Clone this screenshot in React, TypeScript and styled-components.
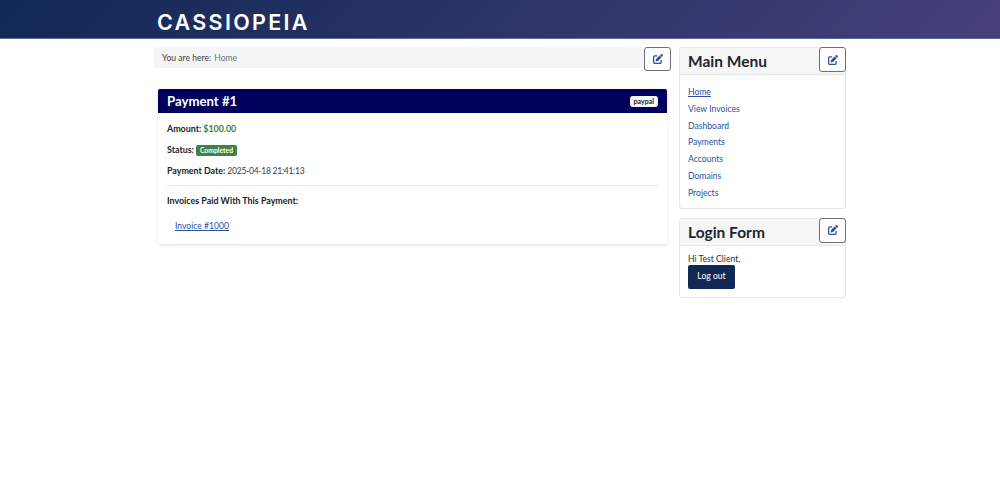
import React from "react";
import styled, { createGlobalStyle } from "styled-components";
import { FaPenToSquare } from "react-icons/fa6";

const GlobalStyle = createGlobalStyle`
  html, body { margin: 0; padding: 0; background: #fff; }
  body {
    font-family: "Lato", "Open Sans", sans-serif;
    font-size: 8.6px;
    color: #22262a;
  }
  * { box-sizing: border-box; }
`;

const Header = styled.header`
  height: 39px;
  background: linear-gradient(135deg, #112855 0%, #46407a 100%);
  border-bottom: 1px solid #5a6a90;
  padding: 7px 0 0 157px;
`;

const Logo = styled.div`
  font-family: "Inter", sans-serif;
  font-size: 21.5px;
  line-height: 30px;
  font-weight: 600;
  letter-spacing: 2.3px;
  color: #fff;
`;

const Page = styled.div`
  width: 692px;
  margin: 8px 0 0 154px;
  display: grid;
  grid-template-columns: 517px 167px;
  column-gap: 8px;
  align-items: start;
`;

const MainColumn = styled.main`
  display: flex;
  flex-direction: column;
`;

const BreadcrumbRow = styled.nav`
  position: relative;
  height: 21px;
  width: 517px;
  background: #f5f5f6;
  padding-left: 8px;
  display: flex;
  align-items: center;
  gap: 3px;
  color: #3a3f44;
`;

const Crumb = styled.span`
  color: #6c757d;
`;

const EditButton = styled.button`
  position: absolute;
  top: 0;
  right: 0;
  width: 27px;
  height: 24px;
  padding: 0;
  background: #fff;
  border: 1px solid #6d6f73;
  border-radius: 3px;
  color: #2a4ea0;
  display: flex;
  align-items: center;
  justify-content: center;
  font-size: 10px;
`;

const Card = styled.section`
  width: 509px;
  margin: 21px 0 0 4px;
  background: #fff;
  border-radius: 2px;
  box-shadow: 0 1px 3px rgba(0, 0, 0, 0.14);
`;

const CardHeader = styled.div`
  height: 24px;
  background: #00005c;
  border-radius: 2px 2px 0 0;
  padding: 0 9px;
  display: flex;
  align-items: center;
  justify-content: space-between;
`;

const CardTitle = styled.h2`
  margin: 0;
  font-size: 13.2px;
  font-weight: 700;
  color: #fff;
`;

const MethodBadge = styled.span`
  background: #f8f9fa;
  color: #212529;
  font-size: 7px;
  font-weight: 700;
  line-height: 11px;
  padding: 0 4px;
  border-radius: 3px;
`;

const CardBody = styled.div`
  padding: 10px 9px 12px;
`;

const Line = styled.p`
  margin: 0 0 9px;
  line-height: 12px;
  display: flex;
  align-items: center;
  gap: 2px;
`;

const Label = styled.strong`
  font-size: 8.9px;
  font-weight: 700;
  color: #1d2024;
`;

const Amount = styled.strong`
  font-size: 8.9px;
  color: #3c7d40;
  font-weight: 700;
`;

const DateText = styled.span`
  letter-spacing: -0.3px;
  color: #3a3f44;
`;

const StatusBadge = styled.span`
  background: #3f8243;
  color: #fff;
  font-size: 6.8px;
  font-weight: 700;
  line-height: 11px;
  padding: 0 4px;
  border-radius: 2px;
`;

const Divider = styled.hr`
  margin: -1px 0 9px;
  border: 0;
  border-top: 1px solid #e4e5e7;
`;

const InvoiceList = styled.div`
  padding: 4px 8px 0;
  line-height: 12px;
`;

const InvoiceLink = styled.a`
  color: #2a4ea0;
  text-decoration: underline;
`;

const Sidebar = styled.aside`
  display: flex;
  flex-direction: column;
  gap: 9px;
`;

const Module = styled.section`
  position: relative;
  border: 1px solid #e6e7e9;
  border-radius: 3px;
  background: #fff;
`;

const ModuleHeader = styled.h3`
  margin: 0;
  height: 27px;
  padding-left: 8px;
  background: #f6f6f7;
  border-bottom: 1px solid #e6e7e9;
  font-size: 15.5px;
  line-height: 26px;
  font-weight: 700;
  color: #22262a;
`;

const ModuleEdit = styled(EditButton)`
  top: -1px;
  right: -1px;
  height: 25px;
`;

const MenuList = styled.ul`
  list-style: none;
  margin: 0;
  padding: 9px 8px 6px;
  display: flex;
  flex-direction: column;
`;

const MenuItem = styled.li<{ $active?: boolean }>`
  height: 16.8px;
  line-height: 16.8px;
  color: #2a4ea0;
  text-decoration: ${(p) => (p.$active ? "underline" : "none")};
`;

const LoginBody = styled.div`
  padding: 8px 8px 8px;
  line-height: 11px;
  color: #2b2f33;
`;

const LogoutButton = styled.button`
  display: block;
  width: 47px;
  height: 24px;
  padding: 0;
  background: #112855;
  border: 0;
  border-radius: 2px;
  color: #fff;
  font: inherit;
`;

const menu = ["Home", "View Invoices", "Dashboard", "Payments", "Accounts", "Domains", "Projects"];

export default function App() {
  return (
    <>
      <GlobalStyle />
      <Header>
        <Logo>CASSIOPEIA</Logo>
      </Header>
      <Page>
        <MainColumn>
          <BreadcrumbRow>
            <span>You are here:</span>
            <Crumb>Home</Crumb>
            <EditButton aria-label="Edit">
              <FaPenToSquare />
            </EditButton>
          </BreadcrumbRow>
          <Card>
            <CardHeader>
              <CardTitle>Payment #1</CardTitle>
              <MethodBadge>paypal</MethodBadge>
            </CardHeader>
            <CardBody>
              <Line>
                <Label>Amount:</Label>
                <Amount>$100.00</Amount>
              </Line>
              <Line>
                <Label>Status:</Label>
                <StatusBadge>Completed</StatusBadge>
              </Line>
              <Line>
                <Label>Payment Date:</Label>
                <DateText>2025-04-18 21:41:13</DateText>
              </Line>
              <Divider />
              <Line>
                <Label>Invoices Paid With This Payment:</Label>
              </Line>
              <InvoiceList>
                <InvoiceLink href="#">Invoice #1000</InvoiceLink>
              </InvoiceList>
            </CardBody>
          </Card>
        </MainColumn>
        <Sidebar>
          <Module>
            <ModuleHeader>Main Menu</ModuleHeader>
            <ModuleEdit aria-label="Edit">
              <FaPenToSquare />
            </ModuleEdit>
            <MenuList>
              {menu.map((item, i) => (
                <MenuItem key={item} $active={i === 0}>
                  {item}
                </MenuItem>
              ))}
            </MenuList>
          </Module>
          <Module>
            <ModuleHeader>Login Form</ModuleHeader>
            <ModuleEdit aria-label="Edit">
              <FaPenToSquare />
            </ModuleEdit>
            <LoginBody>
              Hi Test Client,
              <LogoutButton>Log out</LogoutButton>
            </LoginBody>
          </Module>
        </Sidebar>
      </Page>
    </>
  );
}
